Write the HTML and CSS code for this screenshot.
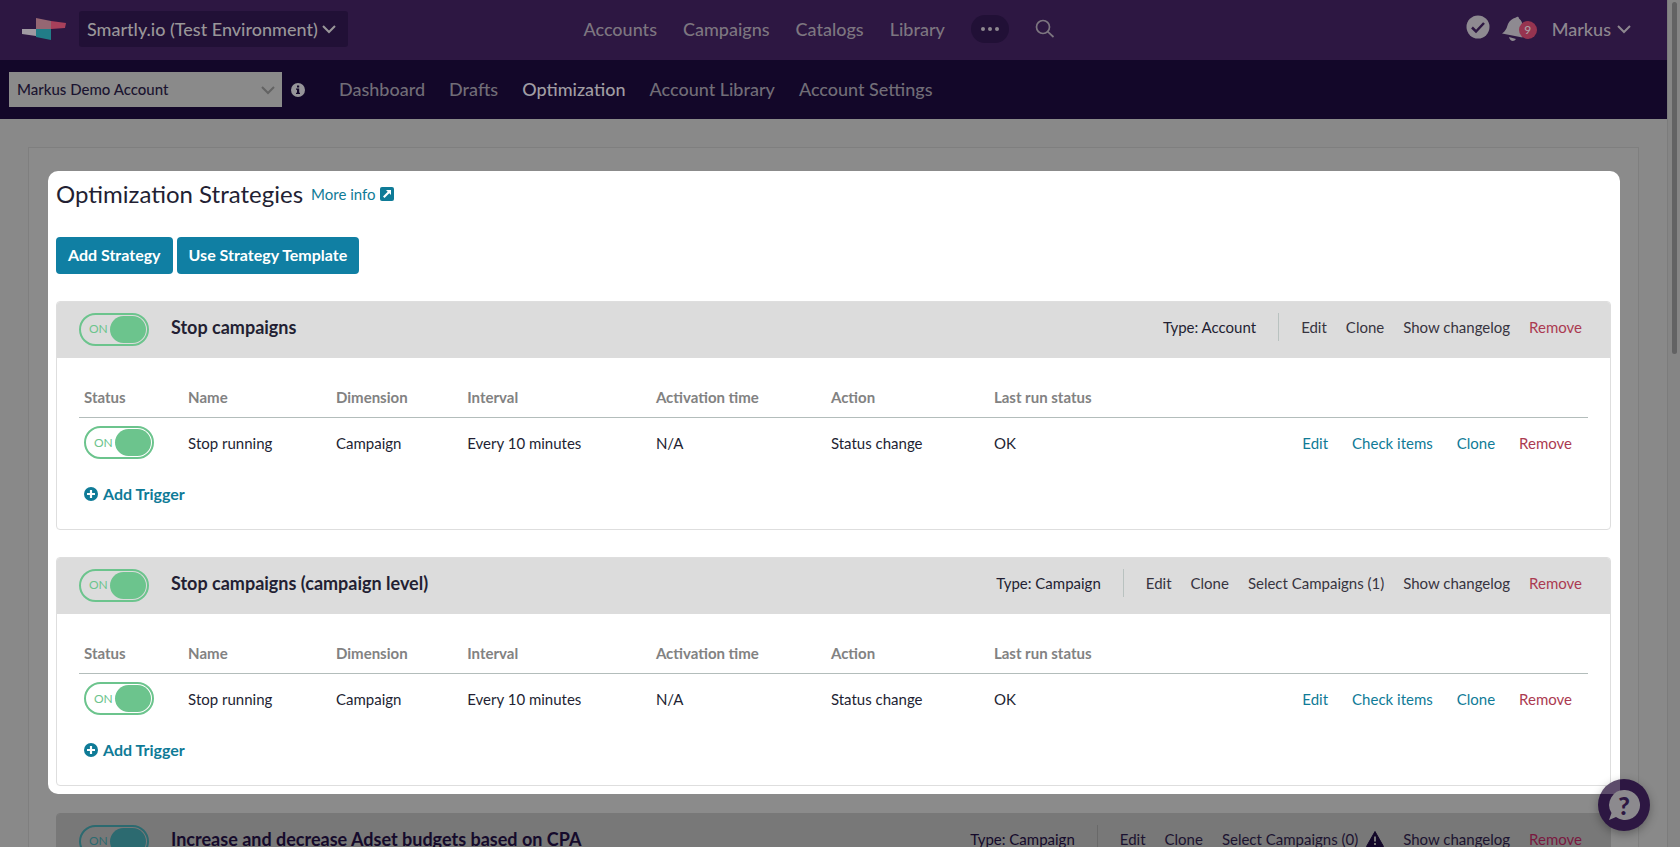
FILE: index.html
```html
<!DOCTYPE html>
<html lang="en">
<head>
<meta charset="utf-8">
<title>Optimization Strategies</title>
<link rel="stylesheet" href="styles.css">
</head>
<body>
<svg class="symbols" aria-hidden="true">
  <symbol id="chevron" viewBox="0 0 14 10"><path d="M1 2 7 8 13 2" fill="none" stroke="currentColor" stroke-width="2"/></symbol>
  <symbol id="plus" viewBox="0 0 14 14"><circle cx="7" cy="7" r="7" fill="currentColor"/><path d="M7 3v8M3 7h8" stroke="#fff" stroke-width="2.200"/></symbol>
</svg>
<div class="screen">
  <div class="page">
    <header class="topbar">
      <div class="brand">
        <svg class="logo" viewBox="0 0 44 22" aria-label="Smartly.io" role="img">
          <path d="M0 11h14v7L0 16z" fill="#a09aa2"/>
          <path d="M14 0l15 3v8H14z" fill="#956773"/>
          <path d="M29 3l15 2-1 5-14 1z" fill="#a8405b"/>
          <path d="M14 11h15v11l-15-3z" fill="#217d88"/>
        </svg>
        <button class="company" type="button">Smartly.io (Test Environment)<svg class="chev"><use href="#chevron"/></svg></button>
      </div>
      <nav class="main-nav" aria-label="Main">
        <a href="#">Accounts</a>
        <a href="#">Campaigns</a>
        <a href="#">Catalogs</a>
        <a href="#">Library</a>
        <button class="more" type="button" aria-label="More"><svg width="20" height="6"><circle cx="3" cy="3" r="2"/><circle cx="10" cy="3" r="2"/><circle cx="17" cy="3" r="2"/></svg></button>
        <button class="plain" type="button" aria-label="Search"><svg width="20" height="20" viewBox="0 0 20 20" fill="none" stroke="currentColor" stroke-width="1.700"><circle cx="8" cy="8" r="6.500"/><path d="M12.700 12.700 18.500 18"/></svg></button>
      </nav>
      <div class="user">
        <button class="plain tasks" type="button" aria-label="Tasks"><svg width="24" height="24" viewBox="0 0 24 24"><circle cx="12" cy="12" r="11.500" fill="#8e8a91"/><path d="M6 12.500l4 4 8-8.500" fill="none" stroke="#2d1742" stroke-width="2.500"/></svg></button>
        <button class="plain bell" type="button" aria-label="Notifications"><svg width="24" height="26" viewBox="0 0 24 26"><path fill="#8e8a91" d="M14 1.500c1-1.500 3-1 3 1 3 2 3.500 5 3.500 9 0 5 1 6 0 10L0 17.500c4-3 4.500-5 6-9.500 1.500-3.500 4-5.300 8-6.500zM7 21l7 2c-2 3-6 2.500-7-2z"/></svg><span class="count">9</span></button>
        <button class="plain name" type="button">Markus<svg class="chev"><use href="#chevron"/></svg></button>
      </div>
    </header>

    <div class="subbar">
      <div class="account">
        <select aria-label="Account"><option>Markus Demo Account</option></select>
        <svg class="account-chev"><use href="#chevron"/></svg>
      </div>
      <svg class="info" viewBox="0 0 14 14" role="img" aria-label="Account info"><circle cx="7" cy="7" r="7" fill="#969499"/><path d="M6 2.500h2.200v2H6zM5 5.500h3.200v4.300H9V11H5V9.800h1V6.700H5z" fill="#130729"/></svg>
      <nav class="sub-nav" aria-label="Account">
        <a href="#">Dashboard</a>
        <a href="#">Drafts</a>
        <a href="#" class="current" aria-current="page">Optimization</a>
        <a href="#">Account Library</a>
        <a href="#">Account Settings</a>
      </nav>
    </div>

    <main class="content">
      <section class="spotlight">
        <div class="heading">
          <h1>Optimization Strategies</h1>
          <a href="#" class="link">More info <svg width="14" height="14" viewBox="0 0 14 14"><rect width="14" height="14" rx="2" fill="currentColor"/><path d="M6 3h5v5L9.300 6.300 4.500 11 3 9.500l4.700-4.800z" fill="#fff"/></svg></a>
        </div>
        <div class="buttons">
          <button class="primary" type="button">Add Strategy</button>
          <button class="primary" type="button">Use Strategy Template</button>
        </div>

        <article class="strategy">
          <header class="strategy-head">
            <label class="switch"><input type="checkbox" checked aria-label="Stop campaigns"><span class="on">ON</span><span class="knob"></span></label>
            <h2>Stop campaigns</h2>
            <span class="type">Type: Account</span>
            <div class="actions"><a href="#">Edit</a><a href="#">Clone</a><a href="#">Show changelog</a><a href="#" class="remove">Remove</a></div>
          </header>
          <div class="strategy-body">
            <table>
              <colgroup><col class="c-status"><col class="c-name"><col class="c-dim"><col class="c-int"><col class="c-time"><col class="c-action"><col class="c-last"><col></colgroup>
              <thead><tr><th>Status</th><th>Name</th><th>Dimension</th><th>Interval</th><th>Activation time</th><th>Action</th><th>Last run status</th><th></th></tr></thead>
              <tbody><tr>
                <td><label class="switch"><input type="checkbox" checked aria-label="Stop running"><span class="on">ON</span><span class="knob"></span></label></td>
                <td>Stop running</td><td>Campaign</td><td>Every 10 minutes</td><td>N/A</td><td>Status change</td><td>OK</td>
                <td><div class="row-links"><a href="#" class="link">Edit</a><a href="#" class="link">Check items</a><a href="#" class="link">Clone</a><a href="#" class="remove">Remove</a></div></td>
              </tr></tbody>
            </table>
            <button class="add" type="button"><svg width="14" height="14"><use href="#plus"/></svg>Add Trigger</button>
          </div>
        </article>

        <article class="strategy">
          <header class="strategy-head">
            <label class="switch"><input type="checkbox" checked aria-label="Stop campaigns (campaign level)"><span class="on">ON</span><span class="knob"></span></label>
            <h2>Stop campaigns (campaign level)</h2>
            <span class="type">Type: Campaign</span>
            <div class="actions"><a href="#">Edit</a><a href="#">Clone</a><a href="#">Select Campaigns (1)</a><a href="#">Show changelog</a><a href="#" class="remove">Remove</a></div>
          </header>
          <div class="strategy-body">
            <table>
              <colgroup><col class="c-status"><col class="c-name"><col class="c-dim"><col class="c-int"><col class="c-time"><col class="c-action"><col class="c-last"><col></colgroup>
              <thead><tr><th>Status</th><th>Name</th><th>Dimension</th><th>Interval</th><th>Activation time</th><th>Action</th><th>Last run status</th><th></th></tr></thead>
              <tbody><tr>
                <td><label class="switch"><input type="checkbox" checked aria-label="Stop running"><span class="on">ON</span><span class="knob"></span></label></td>
                <td>Stop running</td><td>Campaign</td><td>Every 10 minutes</td><td>N/A</td><td>Status change</td><td>OK</td>
                <td><div class="row-links"><a href="#" class="link">Edit</a><a href="#" class="link">Check items</a><a href="#" class="link">Clone</a><a href="#" class="remove">Remove</a></div></td>
              </tr></tbody>
            </table>
            <button class="add" type="button"><svg width="14" height="14"><use href="#plus"/></svg>Add Trigger</button>
          </div>
        </article>
      </section>

      <article class="strategy dimmed">
        <header class="strategy-head">
          <label class="switch"><input type="checkbox" checked aria-label="Increase and decrease Adset budgets based on CPA"><span class="on">ON</span><span class="knob"></span></label>
          <h2>Increase and decrease Adset budgets based on CPA</h2>
          <span class="type">Type: Campaign</span>
          <div class="actions"><a href="#">Edit</a><a href="#">Clone</a><a href="#" class="warned">Select Campaigns (0) <svg width="18" height="16" viewBox="0 0 18 16"><path d="M9 0.500 17.500 15.500H.5z" fill="#130729" stroke="#130729" stroke-linejoin="round"/><path d="M9 5.500v5M9 12v2" stroke="#787878" stroke-width="2"/></svg></a><a href="#">Show changelog</a><a href="#" class="remove">Remove</a></div>
        </header>
      </article>
    </main>
  </div>
  <div class="scroll-track"><div class="scroll-thumb"></div></div>
  <button class="help" type="button" aria-label="Help"><svg width="32" height="32" viewBox="0 0 32 32"><path d="M17 1a15 15 0 1 1-9 27L1 31l2.500-7A15 15 0 0 1 17 1z" fill="#8c8a8e"/></svg><span class="mark">?</span></button>
</div>
</body>
</html>
```
FILE: styles.css
```css
* { box-sizing: border-box; }
body {
  margin: 0;
  background: #898989;
  color: #231f33;
  font-family: Lato, "Liberation Sans", sans-serif;
  font-size: 15px;
  line-height: 20px;
}
a { color: inherit; text-decoration: none; }
button {
  margin: 0;
  padding: 0;
  border: 0;
  background: none;
  color: inherit;
  font: inherit;
  cursor: pointer;
}
h1, h2 { margin: 0; }
svg { flex: none; }
.symbols { position: absolute; width: 0; height: 0; }

.screen { position: relative; display: flex; height: 100vh; overflow: hidden; }
.page { flex: 1; min-width: 0; }

.topbar {
  display: grid;
  grid-template-columns: 35% auto 1fr;
  align-items: center;
  height: 60px;
  padding-bottom: 2px;
  background: #2d1742;
  color: #8d878f;
  font-size: 18px;
  font-weight: 500;
}
.brand { display: flex; align-items: center; gap: 13px; padding-left: 22px; }
.logo { width: 44px; height: 22px; }
.company {
  display: flex;
  align-items: center;
  gap: 4px;
  height: 36px;
  padding: 0 12px 0 8px;
  border-radius: 3px;
  background: #211036;
  color: #999699;
}
.chev { width: 14px; height: 10px; }
.main-nav { display: flex; align-items: center; gap: 26px; color: #7d7680; }
.plain { display: flex; align-items: center; }
.more {
  display: flex;
  align-items: center;
  justify-content: center;
  width: 38px;
  height: 28px;
  border-radius: 14px;
  background: #211036;
  fill: #8d878f;
}
.user { display: flex; align-items: center; justify-content: flex-end; padding-right: 36px; color: #8d878f; }
.user .tasks { margin-right: 12px; padding-bottom: 4px; }
.user .bell { position: relative; margin-right: 26px; }
.count {
  position: absolute;
  left: 17px;
  top: 5px;
  width: 18px;
  height: 18px;
  border-radius: 50%;
  background: #963450;
  color: #aaa0a5;
  font-size: 12px;
  line-height: 18px;
}
.user .name { gap: 6px; }

.subbar {
  display: flex;
  align-items: center;
  height: 59px;
  padding-left: 9px;
  background: #130729;
  color: #716d77;
  font-size: 18px;
  font-weight: 500;
}
.account { position: relative; width: 273px; margin-right: 9px; }
.account select {
  appearance: none;
  display: block;
  width: 100%;
  height: 35px;
  padding: 0 8px 2px;
  border: 0;
  border-radius: 0;
  background: #8a8a8a;
  color: #1b1430;
  font: inherit;
  font-size: 15px;
}
.account-chev { position: absolute; right: 7px; top: 13px; width: 14px; height: 10px; color: #636363; }
.info { width: 14px; height: 14px; margin-right: 34px; }
.sub-nav { display: flex; gap: 24px; padding-bottom: 2px; }
.current { color: #a09da3; }

.content {
  margin: 28px 28px 0;
  padding: 23px 18px 40px 19px;
  border: 1px solid #7f7f7f;
  background: #8b8b8b;
}
.spotlight { padding: 8px 9px 8px 8px; border-radius: 10px; background: #fff; }
.heading { display: flex; align-items: center; gap: 8px; height: 30px; margin-bottom: 28px; }
h1 { font-size: 24px; font-weight: 400; line-height: 30px; }
.link { color: #0f7b97; }
.heading .link { display: flex; align-items: center; gap: 4px; }
.buttons { display: flex; gap: 4px; margin-bottom: 27px; }
.primary {
  height: 37px;
  padding: 0 12px 2px;
  border-radius: 4px;
  background: #107fa3;
  color: #fff;
  font-size: 16px;
  font-weight: 700;
}

.strategy { border: 1px solid #dedede; border-radius: 4px; overflow: hidden; }
.strategy + .strategy { margin-top: 27px; }
.strategy-head {
  display: flex;
  align-items: center;
  height: 56px;
  padding: 0 28px 2px 22px;
  background: #dcdcdc;
}
h2 { flex: 1; margin: 0 0 4px 22px; font-size: 18px; font-weight: 700; line-height: 20px; }
.type { display: flex; align-items: center; height: 28px; margin: 0 22px 4px 0; padding-right: 22px; border-right: 1px solid #b9c2c0; }
.actions { display: flex; gap: 19px; margin-bottom: 4px; color: #37343f; }
.remove { color: #ab3a51; }

.switch {
  position: relative;
  display: flex;
  align-items: center;
  justify-content: space-between;
  width: 70px;
  height: 33px;
  padding: 0 1px 0 8px;
  border: 2px solid #6cc48d;
  border-radius: 17px;
  color: #6cc48d;
  font-size: 12px;
}
.switch input { position: absolute; inset: 0; margin: 0; opacity: 0; }
.knob { width: 36px; height: 27px; border-radius: 14px; background: #6cc48d; }

.strategy-body { padding: 24px 22px 25px; }
table { width: 100%; table-layout: fixed; border-collapse: collapse; }
th, td { padding: 0 0 0 5px; text-align: left; }
th { height: 35px; padding-bottom: 4px; border-bottom: 1px solid #b3bdbb; color: #828282; }
td { height: 51px; }
.c-status { width: 6.9%; }
.c-name { width: 9.8%; }
.c-dim { width: 8.7%; }
.c-int { width: 12.5%; }
.c-time { width: 11.6%; }
.c-action { width: 10.8%; }
.c-last { width: 11%; }
.row-links { display: flex; justify-content: flex-end; gap: 24px; padding-right: 16px; }
.add { display: flex; align-items: center; gap: 5px; margin: 16px 0 0 5px; color: #0f7b97; font-size: 16px; font-weight: 700; }

.dimmed { margin: 19px 9px 0 8px; border-color: #787878; color: #150a2b; }
.dimmed .strategy-head { background: #787878; }
.dimmed .switch { border-color: #2c6a70; color: #2c6a70; }
.dimmed .knob { background: #2c6a70; }
.dimmed .type { border-color: #696969; }
.dimmed .actions { color: #1c1330; }
.dimmed .remove { color: #7a1840; }
.warned { display: flex; align-items: center; gap: 8px; }

.scroll-track { width: 13px; padding: 2px 3px 0 4px; background: #858585; border-left: 1px solid #7c7c7c; }
.scroll-thumb { height: 352px; border-radius: 4px; background: #626263; }
.help {
  position: absolute;
  right: 30px;
  bottom: 16px;
  display: flex;
  align-items: center;
  justify-content: center;
  width: 52px;
  height: 52px;
  border-radius: 50%;
  background: linear-gradient(#5d4c6b, #5d4c6b) 0 0 / 22px 15px no-repeat #2d1742;
  box-shadow: 0 3px 10px rgba(0, 0, 0, 0.3);
}
.mark { position: absolute; inset: 0; color: #2d1742; font-size: 25px; font-weight: 900; line-height: 52px; text-align: center; }
```
